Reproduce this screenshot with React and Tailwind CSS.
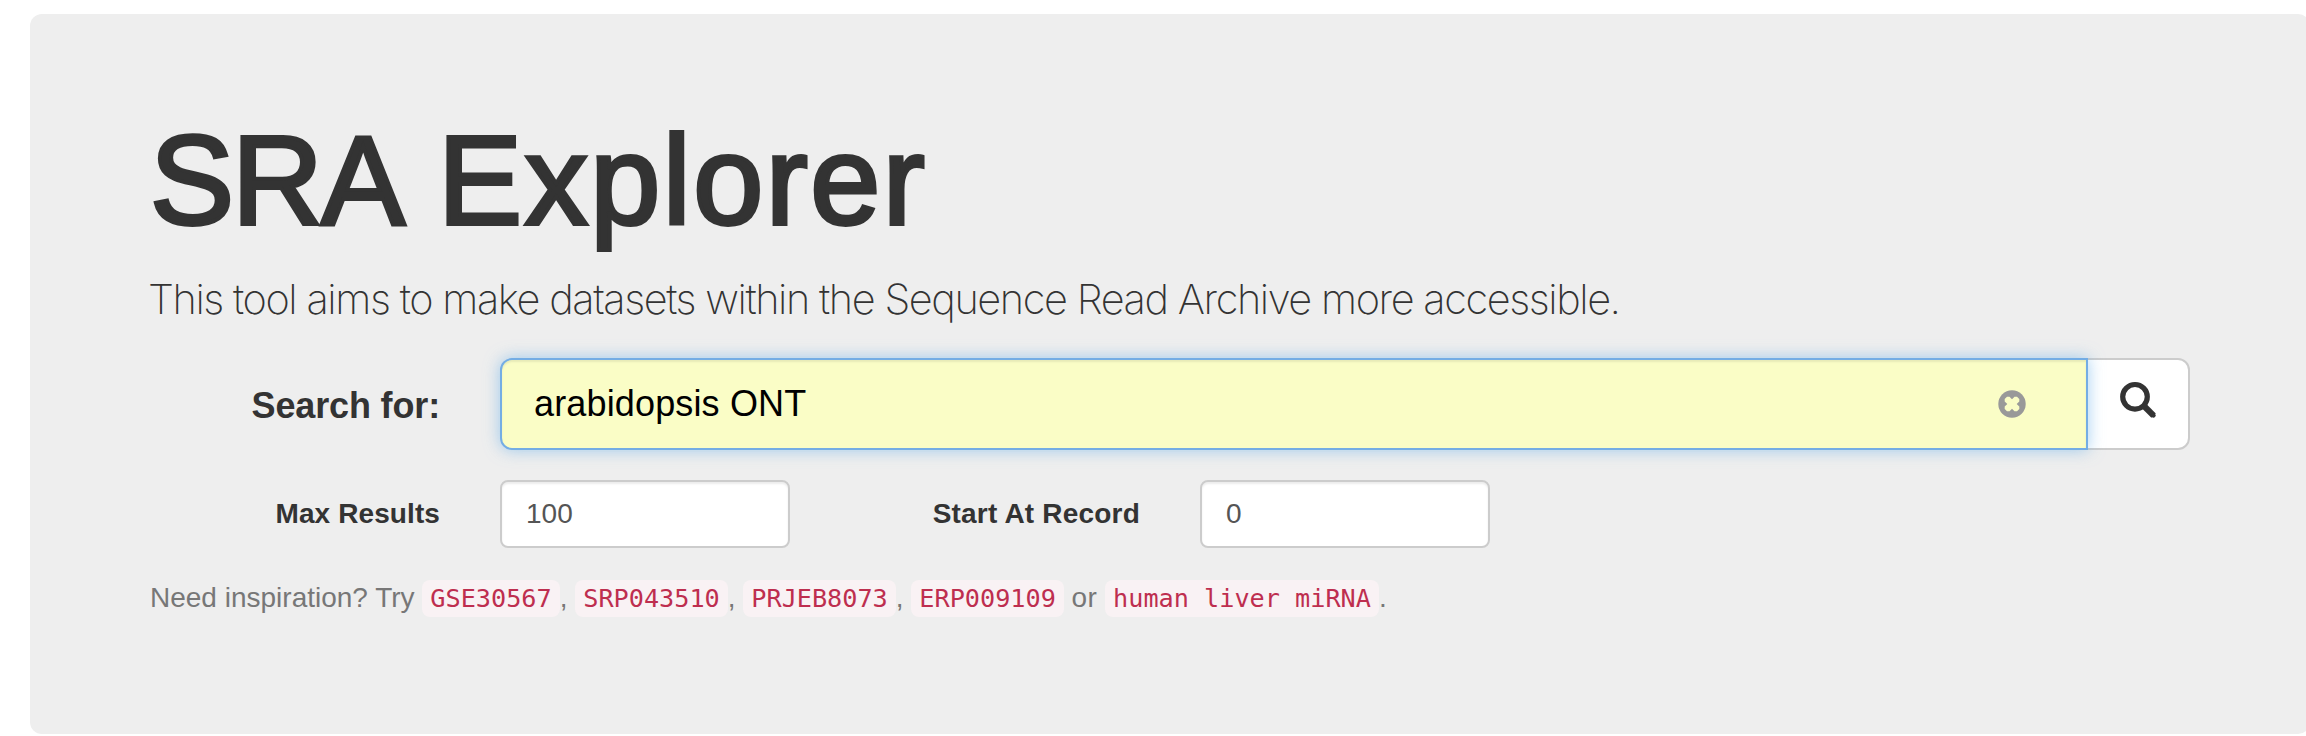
const codeCls =
  "rounded-lg bg-[#f9f2f4] px-2 py-1 font-['DejaVu_Sans_Mono',monospace] text-[25.2px] text-[#be2e4f]";

function Example({ children }) {
  return <code className={codeCls}>{children}</code>;
}

function ClearIcon() {
  return (
    <svg width="28" height="28" viewBox="-14 -14 28 28" aria-hidden="true">
      <circle r="13.7" fill="#999" />
      <path
        d="M-5-7.3H-2.5L0-4.7 2.5-7.3H5L7.3-5V-2.5L4.7 0 7.3 2.5V5L5 7.3H2.5L0 4.7-2.5 7.3H-5L-7.3 5V2.5L-4.7 0-7.3-2.5V-5Z"
        fill="#fafdc6"
      />
    </svg>
  );
}

function SearchIcon() {
  return (
    <svg width="38" height="38" viewBox="0 0 38 38" fill="none" stroke="#333" aria-hidden="true">
      <circle cx="16" cy="15.8" r="12.3" strokeWidth="5.2" />
      <path d="M24 24 34.6 34.6" strokeWidth="6.2" />
      <path d="M33 33 34.4 34.4" strokeWidth="4.6" strokeLinecap="round" />
    </svg>
  );
}

const label = "text-right font-bold leading-10 text-[#333]";
const field =
  "h-[68px] w-[290px] rounded-lg border-2 border-[#ccc] bg-white px-6 text-[28px] text-[#555] shadow-[inset_0_2px_2px_rgba(0,0,0,0.075)] outline-none";

export default function App() {
  return (
    <div className="h-[736px] overflow-hidden bg-white pt-[14px] pl-[30px] font-['Liberation_Sans',Arial,sans-serif] text-[#333]">
      <main className="h-[720px] w-[2280px] rounded-xl bg-[#eee] px-[120px] pt-[97px]">
        <h1 className="h-[139px] whitespace-nowrap text-[126px] leading-[139px] [-webkit-text-stroke:3.8px_#333]">
          <span className="tracking-[-2px]">SRA</span>{" "}
          <span className="tracking-[2.5px]">Explorer</span>
        </h1>
        <p className="mt-[19px] -ml-[2px] h-[60px] whitespace-nowrap font-['Inter',sans-serif] text-[41.5px] font-extralight leading-[60px] tracking-[-1.43px]">
          This tool aims to make datasets within the Sequence Read Archive more accessible.
        </p>
        <form className="mt-[29px]" onSubmit={(e) => e.preventDefault()}>
          <div className="flex items-center">
            <label className={label + " w-[290px] pt-[3px] text-[36px] tracking-[-0.15px]"}>Search for:</label>
            <div className="relative z-10 ml-[60px] flex h-[92px] w-[1588px] items-center rounded-l-xl border-2 border-[#74ade4] bg-[#fafdc6] pr-[60px] pl-8 shadow-[inset_0_2px_2px_rgba(0,0,0,0.075),0_0_16px_rgba(102,175,233,0.6)]">
              <input
                className="min-w-0 flex-1 bg-transparent pb-px text-[36px] tracking-[0.15px] text-black outline-none"
                defaultValue="arabidopsis ONT"
              />
              <ClearIcon />
            </div>
            <button className="-ml-[2px] flex h-[92px] w-[104px] items-start rounded-r-xl border-2 border-[#ccc] bg-white pt-[21px] pl-[31px]">
              <SearchIcon />
            </button>
          </div>
          <div className="mt-[30px] flex items-center">
            <label className={label + " w-[290px] text-[28px] tracking-[0.1px]"}>Max Results</label>
            <input className={field + " ml-[60px]"} defaultValue="100" />
            <label className={label + " w-[350px] text-[28px] tracking-[0.2px]"}>Start At Record</label>
            <input className={field + " ml-[60px]"} defaultValue="0" />
          </div>
        </form>
        <p className="mt-[30px] whitespace-nowrap text-[28px] leading-[40px] text-[#777]">
          Need inspiration? Try <Example>GSE30567</Example>, <Example>SRP043510</Example>,{" "}
          <Example>PRJEB8073</Example>, <Example>ERP009109</Example>{" "}
          <span className="tracking-[0.4px]">or</span>{" "}
          <Example>human liver miRNA</Example>.
        </p>
      </main>
    </div>
  );
}
